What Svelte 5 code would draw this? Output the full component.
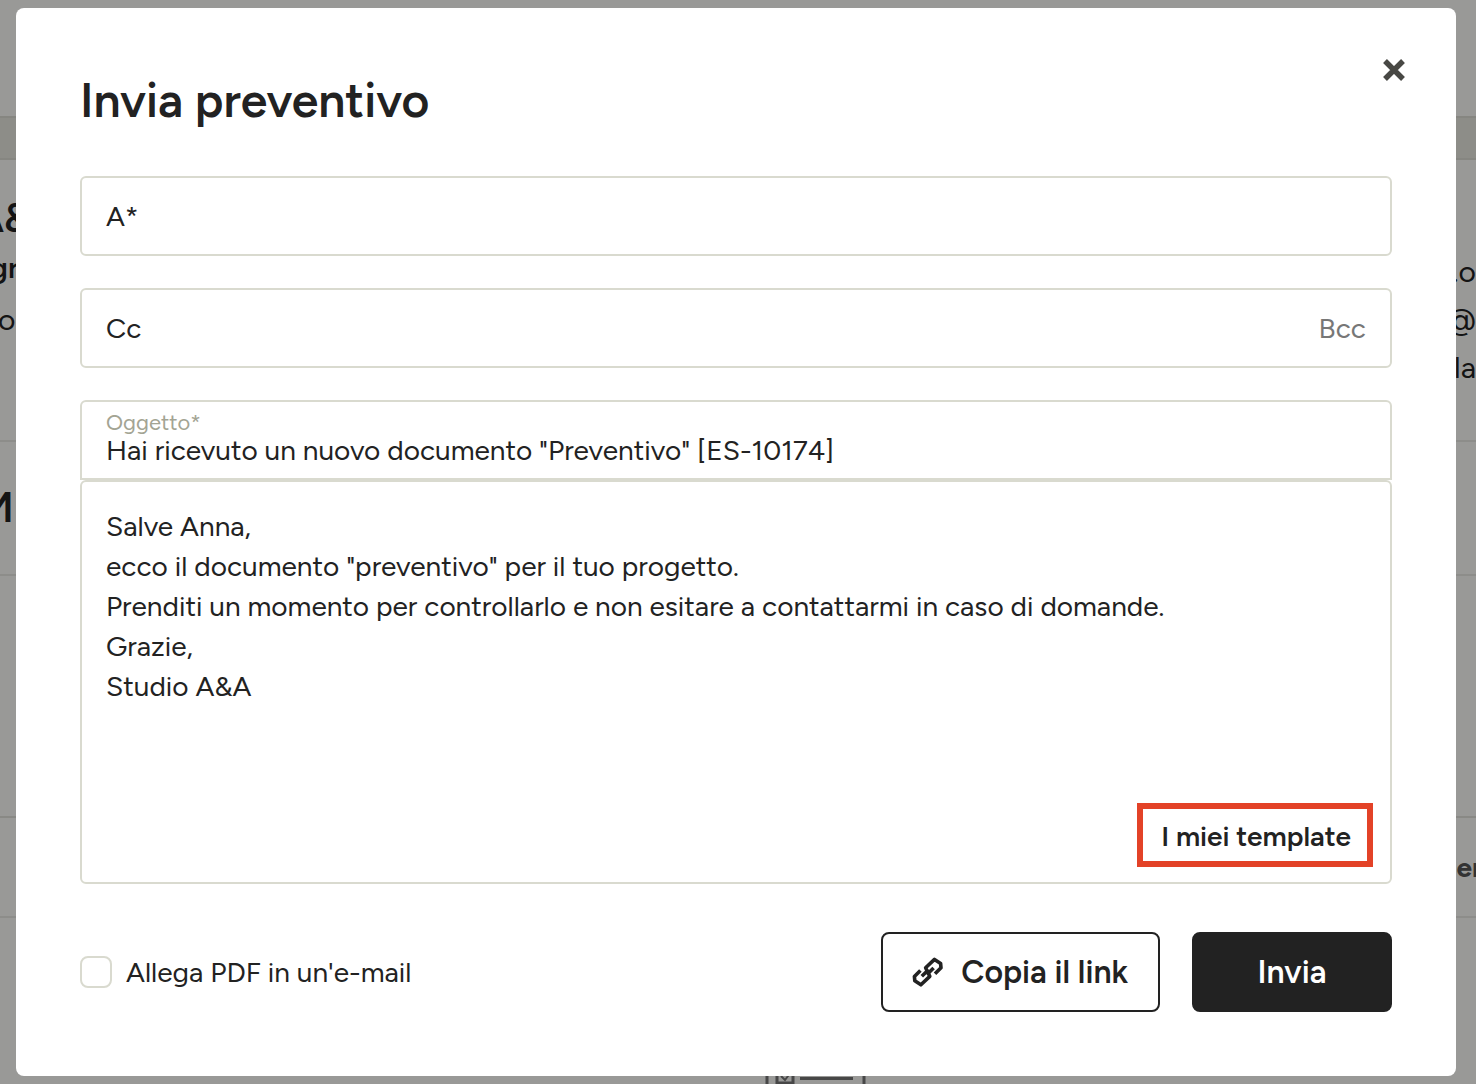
<script lang="ts">
  let recipient = $state('');
  let cc = $state('');
  let subject = $state('Hai ricevuto un nuovo documento "Preventivo" [ES-10174]');
  let message = $state(
    [
      'Salve Anna,',
      'ecco il documento "preventivo" per il tuo progetto.',
      'Prenditi un momento per controllarlo e non esitare a contattarmi in caso di domande.',
      'Grazie,',
      'Studio A&A',
    ].join('\n')
  );
  let attachPdf = $state(false);
  let open = $state(true);
</script>

<div class="page" aria-hidden="true">
  <div class="topbar"></div>
  <div class="band"></div>
  <div class="parties">
    <div class="sender">
      <div class="sender-name">A&amp;</div>
      <div class="sender-role">gr</div>
      <div class="line">o</div>
    </div>
    <div class="client">
      <div class="line">.o</div>
      <div class="line">@</div>
      <div class="line">la</div>
    </div>
  </div>
  <div class="doc-title">M</div>
  <div class="spacer"></div>
  <div class="table-head">en</div>
  <div class="empty">
    <svg width="104" height="80" viewBox="0 0 104 80" fill="none" stroke="#777" stroke-width="3">
      <path d="M3 80V3H100V80" />
      <path d="M13 4H29V21H13Z" />
      <path d="M17 14l4 4 6-8" stroke-width="2" />
      <path d="M36 16.500H89" />
    </svg>
  </div>
</div>

{#if open}
  <div class="backdrop">
    <form class="modal" role="dialog" aria-labelledby="modal-title" onsubmit={(e) => e.preventDefault()}>
      <header class="modal-header">
        <h1 id="modal-title">Invia preventivo</h1>
        <button type="button" class="close" aria-label="Chiudi" onclick={() => (open = false)}>
          <svg width="24" height="24" viewBox="0 0 24 24" stroke="#484844" stroke-width="5.4">
            <path d="M3 3L21 21M21 3L3 21" />
          </svg>
        </button>
      </header>

      <label class="field">
        <span class="label">A*</span>
        <input type="email" bind:value={recipient} />
      </label>

      <div class="field">
        <label class="label" for="cc">Cc</label>
        <input id="cc" type="email" bind:value={cc} />
        <button type="button" class="bcc">Bcc</button>
      </div>

      <div class="mail">
        <label class="field subject">
          <span class="small-label">Oggetto*</span>
          <input type="text" bind:value={subject} />
        </label>
        <div class="message">
          <textarea aria-label="Messaggio" rows="6" bind:value={message}></textarea>
          <button type="button" class="templates">I miei template</button>
        </div>
      </div>

      <footer class="modal-footer">
        <label class="attach">
          <input type="checkbox" bind:checked={attachPdf} />
          <span>Allega PDF in un'e-mail</span>
        </label>
        <button type="button" class="btn outline">
          <svg class="link-icon" width="32" height="32" viewBox="0 0 32 32" fill="none" stroke="#222" stroke-width="3.6" stroke-linejoin="round">
            <path d="M22 17.800L28 11.800L27.600 7.400L21.500 3.400L12.600 11.800L15.200 17.200L20.600 12" />
            <path d="M7.400 14.400L1.400 20.400L1.800 24.800L7.900 28.800L16.800 20.400L14.200 15L8.800 20.200" />
          </svg>
          Copia il link
        </button>
        <button type="submit" class="btn solid">Invia</button>
      </footer>
    </form>
  </div>
{/if}

<style>
  :global(body) {
    overflow: hidden;
    background: #fffffc;
    color: #222;
    font-family: Figtree, Lato, sans-serif;
    font-size: 28px;
  }

  .page {
    height: 100vh;
    margin: 0 -24px;
    overflow: hidden;
  }

  .topbar {
    height: 116px;
  }

  .band {
    height: 40px;
    background: #ebece3;
    border: solid #dfe0d8;
    border-width: 2px 0;
  }

  .parties {
    display: flex;
    justify-content: space-between;
    height: 280px;
    border-bottom: 2px solid #ecece6;
  }

  .sender {
    padding-top: 30px;
  }

  .sender-name {
    font-size: 40px;
    font-weight: 600;
    line-height: 56px;
  }

  .sender-role {
    margin-bottom: 6px;
    padding-left: 14px;
    font-size: 30px;
    font-weight: 600;
    line-height: 44px;
  }

  .line {
    font-size: 30px;
    line-height: 48px;
  }

  .sender .line {
    padding-left: 22px;
  }

  .client {
    padding: 88px 24px 0 0;
    text-align: right;
  }

  .doc-title {
    height: 132px;
    padding-left: 2px;
    border-bottom: 2px solid #ecece6;
    font-size: 42px;
    font-weight: 600;
    line-height: 132px;
  }

  .spacer {
    height: 240px;
    border-bottom: 2px solid #e4e4de;
  }

  .table-head {
    height: 98px;
    padding-right: 12px;
    border-bottom: 2px solid #ecece6;
    color: #555;
    font-weight: 700;
    line-height: 98px;
    text-align: right;
  }

  .empty {
    display: flex;
    justify-content: center;
    padding: 144px 0 0 156px;
  }

  .backdrop {
    position: fixed;
    inset: 0;
    display: flex;
    align-items: flex-start;
    padding: 8px 20px 8px 16px;
    background: rgba(0, 0, 0, 0.4);
  }

  .modal {
    flex: 1;
    min-width: 0;
    box-sizing: border-box;
    padding: 48px 64px 64px;
    background: #fff;
    border-radius: 8px;
  }

  .modal-header {
    display: flex;
    justify-content: space-between;
    align-items: flex-start;
    margin-bottom: 36px;
  }

  h1 {
    margin: 0;
    padding-top: 4px;
    font-size: 48px;
    font-weight: 600;
    line-height: 80px;
  }

  button {
    font-family: inherit;
    color: inherit;
    background: none;
    cursor: pointer;
  }

  .close {
    display: flex;
    margin-right: -14px;
    padding: 2px 0;
    border: none;
  }

  .field {
    display: flex;
    align-items: center;
    gap: 12px;
    box-sizing: border-box;
    height: 80px;
    margin-bottom: 32px;
    padding: 0 24px;
    border: 2px solid #d9dacf;
    border-radius: 6px;
  }

  .field input {
    flex: 1;
    min-width: 0;
    padding: 0;
    border: none;
    outline: none;
    background: none;
    color: inherit;
    font: inherit;
  }

  .bcc {
    padding: 0;
    border: none;
    color: #777;
    font-size: 28px;
  }

  .subject {
    flex-direction: column;
    align-items: stretch;
    gap: 0;
    margin: 0;
    padding-top: 8px;
    border-radius: 6px 6px 0 0;
  }

  .subject .small-label {
    color: #a3a493;
    font-size: 22px;
    line-height: 26px;
  }

  .subject input {
    flex: none;
    height: 28px;
    line-height: 28px;
  }

  .message {
    display: flex;
    flex-direction: column;
    padding: 24px 17px 15px 24px;
    border: 2px solid #d9dacf;
    border-radius: 6px;
  }

  textarea {
    display: block;
    height: 297px;
    padding: 0;
    border: none;
    outline: none;
    resize: none;
    color: inherit;
    font: inherit;
    line-height: 40px;
  }

  .templates {
    align-self: flex-end;
    height: 64px;
    padding: 2px 16px 0 18px;
    border: 6px solid #e34227;
    font-size: 28px;
    font-weight: 600;
  }

  .modal-footer {
    display: flex;
    align-items: center;
    gap: 32px;
    margin-top: 48px;
  }

  .attach {
    display: flex;
    align-items: center;
    gap: 14px;
    margin-right: auto;
  }

  .attach input {
    appearance: none;
    width: 32px;
    height: 32px;
    margin: 0;
    border: 2px solid #d9dacf;
    border-radius: 8px;
  }

  .attach input:checked {
    background: #222;
  }

  .btn {
    display: flex;
    align-items: center;
    justify-content: center;
    gap: 16px;
    height: 80px;
    padding: 0 30px;
    border: 2px solid #222;
    border-radius: 8px;
    font-size: 32px;
    font-weight: 600;
  }

  .link-icon {
    overflow: visible;
  }

  .solid {
    width: 200px;
    background: #222;
    color: #fff;
  }
</style>
